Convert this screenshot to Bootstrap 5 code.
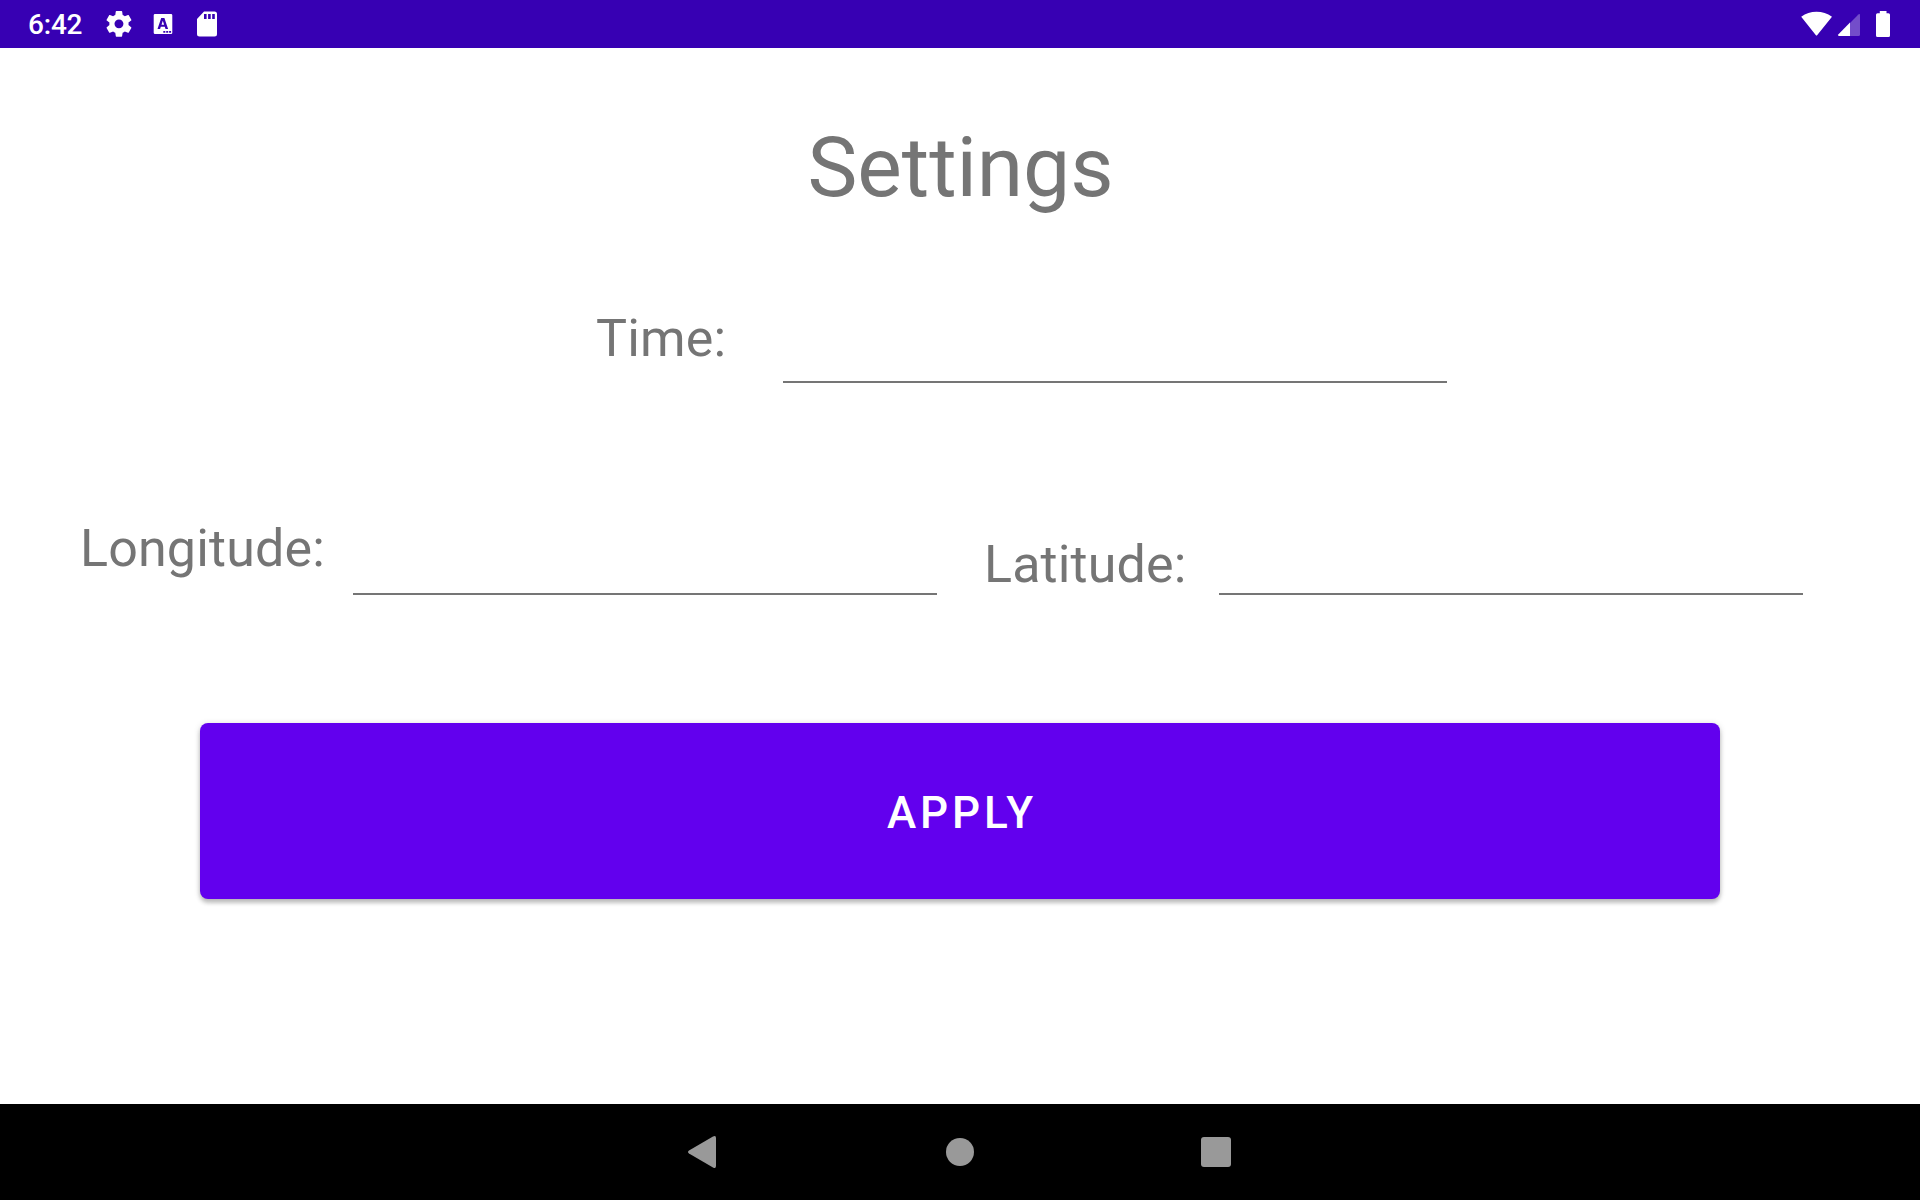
<!DOCTYPE html>
<html lang="en">
<head>
<meta charset="utf-8">
<meta name="viewport" content="width=device-width, initial-scale=1">
<title>Settings</title>
<link href="https://cdn.jsdelivr.net/npm/bootstrap@5.3.0/dist/css/bootstrap.min.css" rel="stylesheet">
<style>
  body { font-family: Roboto, sans-serif; color: #757575; }
  .status-bar { height: 48px; background: #3700b3; padding: 0 28px; color: #fff; }
  .status-bar svg, .nav-keys svg { display: block; flex: none; }
  .clock { font-size: 28px; font-weight: 500; line-height: 48px; width: 72px; padding-top: 1px; letter-spacing: -.2px; }
  .screen-title { font-size: 84px; font-weight: 400; line-height: 98px; margin: 71px 0 0; padding-left: 1px; letter-spacing: -.1px; }
  .field-label { font-size: 52px; line-height: 61px; flex: none; white-space: nowrap; letter-spacing: .15px; }
  .line-input.form-control { border: 0; border-bottom: 2px solid #757575; border-radius: 0; padding: 0 8px; height: 85px; font-size: 36px; box-shadow: none; background: transparent; }
  .time-row { margin: 81px 473px 0 596px; height: 85px; padding-top: 10px; }
  .time-row .line-input { width: 664px; height: 75px; }
  .coord-row { margin-top: 127px; padding: 0 117px 0 80px; height: 85px; }
  .coord-row .line-input { width: 584px; }
  .lon-label { width: 273px; padding-top: 8px; }
  .lat-label { width: 235px; margin-left: 47px; padding-top: 24px; }
  .apply-btn.btn { --bs-btn-color: #fff; --bs-btn-bg: #6200ee; --bs-btn-hover-bg: #5600d2; --bs-btn-hover-color: #fff; margin: 128px 200px 0; height: 176px; border: 0; border-radius: 8px; font-size: 44px; font-weight: 500; letter-spacing: 3.93px; box-shadow: 0 4px 4px rgba(0,0,0,.2), 0 1px 6px rgba(0,0,0,.17); padding: 4px 0 0 4px; }
  .nav-keys { height: 96px; background: #000; gap: 208px; }
</style>
</head>
<body>
<div class="d-flex flex-column vh-100 bg-white overflow-hidden">
  <header class="status-bar d-flex justify-content-between">
    <div class="d-flex align-items-start">
      <div class="clock">6:42</div>
      <svg width="134" height="48" viewBox="100 0 134 48" fill="#fff" aria-hidden="true">
        <path transform="translate(103.6 8.5) scale(1.28)" d="M19.43 12.98c.04-.32.07-.64.07-.98s-.03-.66-.07-.98l2.11-1.65c.19-.15.24-.42.12-.64l-2-3.46c-.12-.22-.39-.3-.61-.22l-2.49 1c-.52-.4-1.08-.73-1.69-.98l-.38-2.65C14.46 2.18 14.25 2 14 2h-4c-.25 0-.46.18-.49.42l-.38 2.65c-.61.25-1.17.59-1.69.98l-2.49-1c-.23-.09-.49 0-.61.22l-2 3.46c-.13.22-.07.49.12.64l2.11 1.65c-.04.32-.07.65-.07.98s.03.66.07.98l-2.11 1.65c-.19.15-.24.42-.12.64l2 3.46c.12.22.39.3.61.22l2.49-1c.52.4 1.08.73 1.69.98l.38 2.65c.03.24.24.42.49.42h4c.25 0 .46-.18.49-.42l.38-2.65c.61-.25 1.17-.59 1.69-.98l2.49 1c.23.09.49 0 .61-.22l2-3.46c.12-.22.07-.49-.12-.64l-2.11-1.65zM12 15.5c-1.93 0-3.5-1.57-3.5-3.5s1.57-3.5 3.5-3.5 3.500 1.57 3.500 3.500-1.57 3.500-3.500 3.500z"/>
        <path fill-rule="evenodd" d="M155 14h16q1.300 0 1.300 1.300v17.400q0 1.300-1.300 1.300h-16q-1.300 0-1.300-1.300v-17.400q0-1.300 1.300-1.300zM161.200 18l-3.700 11h2.600l.7-2.200h4l.7 2.200h2.600l-3.700-11zM162.800 20.700l1.300 4.100h-2.600zM163.300 31v1.800h2v-1.800zM166.200 31v1.800h2v-1.800zM169.100 31v1.800h2v-1.800z"/>
        <path fill-rule="evenodd" d="M204 11.500h10.500q2.500 0 2.500 2.500v20q0 2.500-2.500 2.500h-15q-2.500 0-2.500-2.500v-15zM204 14v5h2.600v-5zM208.100 14v5h2.600v-5zM212.200 14v5h2.600v-5z"/>
      </svg>
    </div>
    <svg width="96" height="48" viewBox="1796 0 96 48" fill="#fff" aria-hidden="true">
      <path d="M1801.200 16.800Q1808 11.700 1816.500 11.700T1832 16.800L1817.300 35Q1816.500 36 1815.700 35Z"/>
      <path fill-opacity=".3" d="M1850 23l8.400-8.500q1.600-1.200 1.600.8v19.200q0 1.500-1.500 1.500h-8.500z"/>
      <path d="M1850 22.500v13.500h-11q-1.700-.2-.5-1.700z"/>
      <path d="M1879.800 11h6.700v2.300h2q1.500 0 1.500 1.500v20.700q0 1.500-1.500 1.500h-11q-1.500 0-1.500-1.500v-20.700q0-1.500 1.500-1.500h2.300z"/>
    </svg>
  </header>

  <main class="flex-grow-1 d-flex flex-column">
    <h1 class="screen-title text-center">Settings</h1>
    <div class="time-row d-flex justify-content-between align-items-start">
      <label class="field-label" for="time">Time:</label>
      <input class="form-control line-input" id="time" type="text">
    </div>
    <div class="coord-row d-flex align-items-start">
      <label class="field-label lon-label" for="lon">Longitude:</label>
      <input class="form-control line-input" id="lon" type="text">
      <label class="field-label lat-label" for="lat">Latitude:</label>
      <input class="form-control line-input" id="lat" type="text">
    </div>
    <button class="btn apply-btn" type="button">APPLY</button>
  </main>

  <footer class="nav-keys d-flex justify-content-center align-items-center">
    <svg width="48" height="48" viewBox="0 0 48 48" fill="#999" aria-label="Back"><path d="M9 22.500L33 8.500Q36 7 36 10V38Q36 41 33 39.500L9 25.500Q7 24 9 22.500Z"/></svg>
    <svg width="48" height="48" viewBox="0 0 48 48" fill="#999" aria-label="Home"><circle cx="24" cy="24" r="14"/></svg>
    <svg width="48" height="48" viewBox="0 0 48 48" fill="#999" aria-label="Recents"><rect x="9" y="9" width="30" height="30" rx="3"/></svg>
  </footer>
</div>
<script src="https://cdn.jsdelivr.net/npm/bootstrap@5.3.0/dist/js/bootstrap.bundle.min.js"></script>
</body>
</html>
